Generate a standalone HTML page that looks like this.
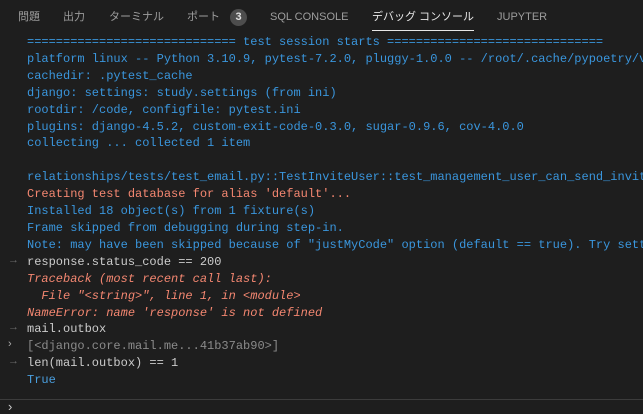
<!DOCTYPE html>
<html><head><meta charset="utf-8"><style>
html,body{margin:0;padding:0;background:#1e1e1e;width:643px;height:414px;overflow:hidden}
.tabs{position:absolute;top:0;left:0;width:643px;height:34px;font-family:"Liberation Sans","Noto Sans CJK JP",sans-serif;font-size:11px;color:#9d9d9d}
.tabs span{position:absolute;top:10px;height:14px;line-height:14px;white-space:nowrap}
.badge{position:absolute;left:230px;top:9px;width:17px;height:17px;border-radius:50%;background:#4d4d4d;color:#e0e0e0;font-size:11px;text-align:center;line-height:17px;font-weight:bold}
.ul{position:absolute;left:372px;top:30px;width:102px;height:1px;background:#e7e7e7}
.con{position:absolute;left:27px;top:34px;font-family:"Liberation Mono",monospace;font-size:12px;line-height:16.9px;white-space:pre}
.b{color:#3a96dd}.r{color:#f48771}.w{color:#cccccc}.g{color:#8b8b8b}.ri{color:#f48771;font-style:italic}.t{color:#4a9fdf}
.arr{position:absolute;left:8px;color:#6a6a6a;font-family:"Liberation Sans",sans-serif;font-size:11px}
.sep{position:absolute;left:0;top:399px;width:643px;height:1px;background:#3c3c3c}
</style></head><body>
<div class="tabs">
<span style="left:18px">問題</span>
<span style="left:63px">出力</span>
<span style="left:109px">ターミナル</span>
<span style="left:187px">ポート</span>
<div class="badge">3</div>
<span style="left:270px">SQL CONSOLE</span>
<span style="left:372px;color:#e7e7e7">デバッグ コンソール</span>
<span style="left:497px">JUPYTER</span>
<div class="ul"></div>
</div>
<div class="con"><span class="b">============================= test session starts ==============================</span>
<span class="b">platform linux -- Python 3.10.9, pytest-7.2.0, pluggy-1.0.0 -- /root/.cache/pypoetry/v</span>
<span class="b">cachedir: .pytest_cache</span>
<span class="b">django: settings: study.settings (from ini)</span>
<span class="b">rootdir: /code, configfile: pytest.ini</span>
<span class="b">plugins: django-4.5.2, custom-exit-code-0.3.0, sugar-0.9.6, cov-4.0.0</span>
<span class="b">collecting ... collected 1 item</span>

<span class="b">relationships/tests/test_email.py::TestInviteUser::test_management_user_can_send_invit</span>
<span class="r">Creating test database for alias 'default'...</span>
<span class="b">Installed 18 object(s) from 1 fixture(s)</span>
<span class="b">Frame skipped from debugging during step-in.</span>
<span class="b">Note: may have been skipped because of "justMyCode" option (default == true). Try sett</span>
<span class="w">response.status_code == 200</span>
<span class="ri">Traceback (most recent call last):</span>
<span class="ri">  File "&lt;string&gt;", line 1, in &lt;module&gt;</span>
<span class="ri">NameError: name 'response' is not defined</span>
<span class="w">mail.outbox</span>
<span class="g">[&lt;django.core.mail.me...41b37ab90&gt;]</span>
<span class="w">len(mail.outbox) == 1</span>
<span class="t">True</span></div>
<span class="arr" style="top:254px">→</span>
<span class="arr" style="top:321px">→</span>
<span class="arr" style="top:338px;color:#aaa">›</span>
<span class="arr" style="top:355px">→</span>
<div class="sep"></div>
<span class="arr" style="top:399px;color:#ccc;font-size:13px">›</span>
</body></html>
